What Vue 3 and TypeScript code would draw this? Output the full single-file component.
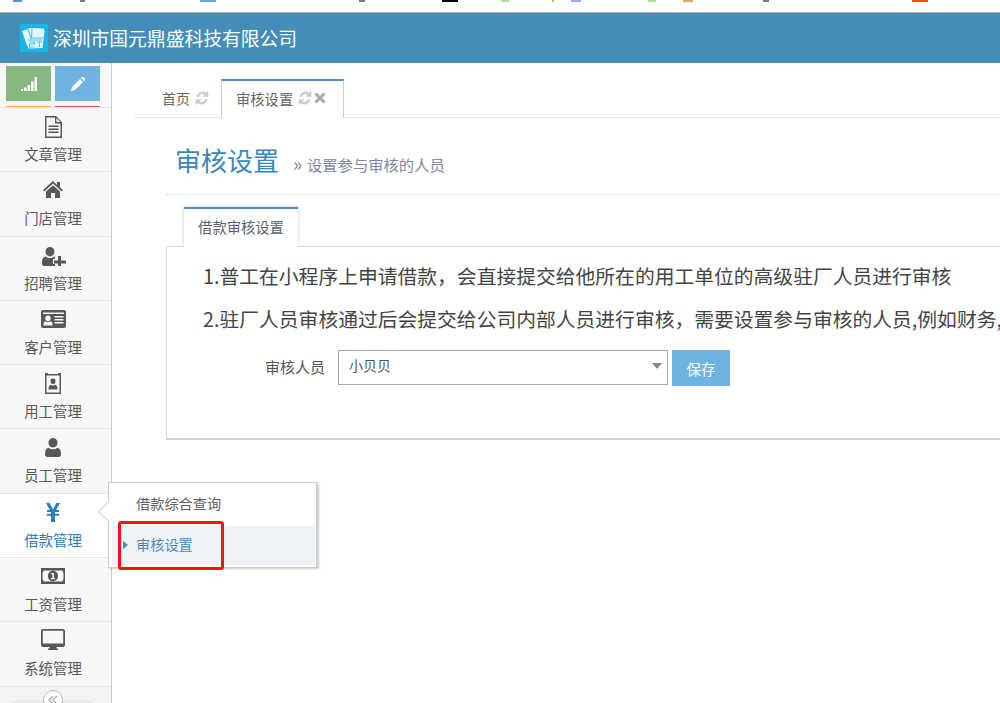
<script setup lang="ts">
interface NavItem {
  label: string
  path: string
  active?: boolean
}

const navItems: NavItem[] = [
  { label: '文章管理', path: 'M5 1h11l6 6v16H5zM6.500 2.500v19h14V8.500H15v-6zM16.500 3v4h4zM8.500 10.500h10V12h-10zM8.500 13.500h10V15h-10zM8.500 16.500h10V18h-10z' },
  { label: '门店管理', path: 'M13 2 3 11l1.200 1.400L13 4.600l8.800 7.800L23 11l-3-2.700V3h-3v3zM6 12.500 13 6.300l7 6.200V19h-5v-5h-4v5H6z' },
  { label: '招聘管理', path: 'M10 3a4.500 4.500 0 0 1 4.500 4.500c0 2.600-2 5-4.500 5s-4.500-2.400-4.500-5A4.500 4.500 0 0 1 10 3zM2 19c0-4 1-6 4-6.500 1 1 2.500 1.500 4 1.500s3-.5 4-1.500l1 .3V15h-2v5h2v2H4c-1.300 0-2-1.200-2-3zM18 12h3v4.500h5v3h-5V22h-3v-2.500h-4v-3h4z' },
  { label: '客户管理', path: 'M3 2h21a2 2 0 0 1 2 2v14a2 2 0 0 1-2 2H3a2 2 0 0 1-2-2V4a2 2 0 0 1 2-2zM3 4.500V6h21V4.500zM8 7.500a2.700 2.700 0 0 0-2.700 2.800c0 1.600 1.200 2.900 2.700 2.900s2.700-1.300 2.700-2.900A2.700 2.700 0 0 0 8 7.500zM3.500 17.500h9c0-2.500-.5-4-2-4.300-.7.600-1.500.9-2.500.9s-1.800-.3-2.500-.9c-1.500.3-2 1.800-2 4.300zM14.500 8v1.500h9V8zM14.500 11v1.500h9V11zM14.500 14v1.500h9V14z' },
  { label: '用工管理', path: 'M5 1h3v1h10V1h3v21H5zM6.500 3.500v17h13v-17zM13 6.500a2.500 2.500 0 0 1 2.500 2.700c0 1.600-1.100 2.900-2.500 2.900s-2.500-1.300-2.500-2.900A2.500 2.500 0 0 1 13 6.500zM8.500 17.500c0-3 .8-4.500 2.200-4.800.7.500 1.400.8 2.300.8s1.600-.3 2.300-.8c1.400.3 2.200 1.800 2.200 4.800z' },
  { label: '员工管理', path: 'M13 2a4.500 4.500 0 0 1 4.500 4.800c0 2.600-2 4.700-4.500 4.700s-4.500-2.100-4.500-4.700A4.500 4.500 0 0 1 13 2zM5 18.500c0-4 1-6.300 3.700-6.800 1.200 1 2.700 1.500 4.300 1.500s3.100-.5 4.300-1.500c2.700.5 3.700 2.800 3.700 6.800 0 1.600-1 2.500-2.500 2.500h-11C6 21 5 20.100 5 18.500z' },
  { label: '借款管理', path: 'M6 2h3.600l3.400 6.500L16.400 2H20l-3.800 7H19v2h-4v1.700h4v2h-4V21h-4v-6.300H7v-2h4V11H7V9h2.800z', active: true },
  { label: '工资管理', path: 'M1 3h24v16H1zM3.500 5.500c0 1.500-.5 2-1 2v7c.5 0 1 .5 1 2h19c0-1.500.5-2 1-2v-7c-.5 0-1-.5-1-2zM13 5.800c3 0 5 2.300 5 5.200s-2 5.200-5 5.200-5-2.300-5-5.200 2-5.200 5-5.200zM11.300 8v1.200h1V13H11v1.200h4V13h-1.100V8z' },
  { label: '系统管理', path: 'M3 0h20a2 2 0 0 1 2 2v14a2 2 0 0 1-2 2h-6.500v1.500H18V21H8v-1.500h1.500V18H3a2 2 0 0 1-2-2V2a2 2 0 0 1 2-2zM2.800 1.800v12.700h20.400V1.800z' }
]

const refreshPath = 'M11 2.200A5.500 5.500 0 0 0 2 5.500h1.800A3.800 3.800 0 0 1 9.900 3.700L8.200 5.400H13V.6zM3 11.800A5.500 5.500 0 0 0 12 8.500h-1.800a3.800 3.800 0 0 1-6.100 1.800l1.700-1.700H1v4.800z'
</script>

<template>
  <div class="page">
    <div class="browser-strip">
      <i class="bit" style="left: 13px; width: 9px; background: #5b8fe0"></i>
      <i class="bit" style="left: 80px; width: 5px; background: #777"></i>
      <i class="bit" style="left: 200px; width: 16px; background: #6f9fe8"></i>
      <i class="bit" style="left: 359px; width: 6px; background: #777"></i>
      <i class="bit" style="left: 442px; width: 16px; background: #000"></i>
      <i class="bit" style="left: 501px; width: 8px; background: #a6e29a"></i>
      <i class="bit" style="left: 552px; width: 2px; background: #e8a050"></i>
      <i class="bit" style="left: 571px; width: 10px; background: #8fb6e8"></i>
      <i class="bit" style="left: 648px; width: 8px; background: #a6e29a"></i>
      <i class="bit" style="left: 683px; width: 10px; background: #d9a86a"></i>
      <i class="bit" style="left: 763px; width: 6px; background: #777"></i>
      <i class="bit" style="left: 912px; width: 16px; background: #ff4a12"></i>
    </div>

    <header class="navbar">
      <svg class="logo" width="28" height="28" viewBox="0 0 28 28">
        <rect width="28" height="28" fill="#19b5ea" />
        <path d="M2 7l6-2 1-1 15 .5.500 3-2 16.500-14 .5L6 19z" fill="#e6f7fc" />
        <path d="M8 5l3 10M12 5l-.5 9h13M8 16h14M9.500 18h5v2h-5v3h5M17 18h5M19.500 18v5" fill="none" stroke="#4cc4ec" stroke-width="1.100" />
      </svg>
      <span class="brand">深圳市国元鼎盛科技有限公司</span>
    </header>

    <div class="layout">
      <aside class="sidebar">
        <div class="shortcuts">
          <div class="shortcut">
            <button class="short-btn green">
              <svg width="16" height="14" viewBox="0 0 16 14" fill="#fff">
                <rect x="0" y="12" width="2" height="2" />
                <rect x="3" y="10.500" width="2.500" height="3.500" />
                <rect x="6.500" y="8" width="2.500" height="6" />
                <rect x="10" y="4.500" width="2.500" height="9.500" />
                <rect x="13.500" y="0" width="2.500" height="14" />
              </svg>
            </button>
            <span class="short-line orange"></span>
          </div>
          <div class="shortcut">
            <button class="short-btn blue">
              <svg width="14" height="14" viewBox="0 0 14 14" fill="#fff">
                <path d="M0 14l1-4 8-8 3 3-8 8zM10 1l1-1c.5-.3 1-.3 1.500 0l1.500 1.500c.3.500.3 1 0 1.500l-1 1z" />
              </svg>
            </button>
            <span class="short-line red"></span>
          </div>
        </div>

        <nav class="nav-list">
          <a v-for="item in navItems" :key="item.label" class="nav-item" :class="{ active: item.active }">
            <svg class="nav-icon" width="26" height="24" viewBox="0 0 26 24">
              <path :d="item.path" fill="currentColor" fill-rule="evenodd" />
            </svg>
            <span class="nav-label">{{ item.label }}</span>
          </a>
        </nav>

        <div class="collapse">
          <span class="collapse-btn">
            <svg width="10" height="10" viewBox="0 0 10 10">
              <path d="M5 1 1 5l4 4M9 1 5 5l4 4" fill="none" stroke="#aaa" stroke-width="1.300" />
            </svg>
          </span>
        </div>
      </aside>

      <main class="main">
        <div class="tabbar">
          <div class="tab">
            <span>首页</span>
            <svg class="refresh" width="14" height="14" viewBox="0 0 14 14"><path :d="refreshPath" fill="#ccc" stroke="#ccc" stroke-width="0.700" /></svg>
          </div>
          <div class="tab current">
            <span>审核设置</span>
            <svg class="refresh" width="14" height="14" viewBox="0 0 14 14"><path :d="refreshPath" fill="#ccc" stroke="#ccc" stroke-width="0.700" /></svg>
            <svg class="close" width="12" height="12" viewBox="0 0 12 12"><path d="M1.500 1.500l9 9M10.500 1.500l-9 9" stroke="#aaa" stroke-width="3" /></svg>
          </div>
        </div>

        <div class="content">
          <div class="page-header">
            <h1>审核设置</h1>
            <small><span class="raquo">»</span>设置参与审核的人员</small>
          </div>

          <div class="inner-tabs">
            <div class="inner-tab">借款审核设置</div>
          </div>

          <section class="panel">
            <p class="line">1.普工在小程序上申请借款，会直接提交给他所在的用工单位的高级驻厂人员进行审核</p>
            <p class="line">2.驻厂人员审核通过后会提交给公司内部人员进行审核，需要设置参与审核的人员,例如财务,人事等</p>
            <div class="form-row">
              <label>审核人员</label>
              <div class="select">
                <span>小贝贝</span>
                <i class="caret"></i>
              </div>
              <button class="save">保存</button>
            </div>
          </section>
        </div>
      </main>
    </div>

    <div class="popup">
      <i class="popup-arrow"></i>
      <div class="popup-item">借款综合查询</div>
      <div class="popup-item selected"><i class="marker"></i>审核设置</div>
    </div>
    <div class="annotation"></div>
  </div>
</template>

<style>
html,
body {
  margin: 0;
  background: #fff;
}
</style>

<style scoped>
.page {
  position: relative;
  width: 1000px;
  height: 703px;
  overflow: hidden;
  background: #fff;
  font-family: "Noto Sans CJK SC", "Liberation Sans", sans-serif;
  color: #555;
}

.browser-strip {
  position: relative;
  height: 12px;
  border-bottom: 1px solid #b4b4b4;
  box-sizing: content-box;
}

.bit {
  position: absolute;
  top: 0;
  height: 2px;
}

.navbar {
  height: 50px;
  background: #438eb9;
  display: flex;
  align-items: center;
  padding-left: 20px;
  box-sizing: border-box;
}

.logo {
  flex: none;
}

.brand {
  margin-left: 5px;
  font-size: 18.800px;
  color: #fff;
  line-height: 24px;
}

.layout {
  display: flex;
  height: 640px;
}

.sidebar {
  width: 112px;
  flex: none;
  box-sizing: border-box;
  background: #f7f7f7;
  border-right: 1px solid #ccc;
  display: flex;
  flex-direction: column;
}

.shortcuts {
  display: flex;
  gap: 4px;
  height: 44px;
  padding: 3px 0 0 6px;
  box-sizing: border-box;
}

.shortcut {
  width: 45px;
}

.short-btn {
  display: flex;
  align-items: center;
  justify-content: center;
  width: 45px;
  height: 35px;
  padding: 0;
  border: 0;
}

.short-btn.green {
  background: #87b87f;
}

.short-btn.blue {
  background: #6fb3e0;
}

.short-line {
  display: block;
  height: 1px;
  margin-top: 5px;
}

.short-line.orange {
  background: #ffb44b;
}

.short-line.red {
  background: #d15b47;
}

.nav-list {
  border-top: 1px solid #e5e5e5;
}

.nav-item {
  display: flex;
  flex-direction: column;
  align-items: center;
  height: 64.300px;
  box-sizing: border-box;
  padding: 7px 5px 0 0;
  border-bottom: 1px solid #e5e5e5;
  color: #585858;
}

.nav-item.active {
  background: #fff;
  color: #2b7dbc;
}

.nav-icon {
  flex: none;
}

.nav-label {
  margin-top: 5px;
  font-size: 14.400px;
  line-height: 20px;
}

.collapse {
  position: relative;
  flex: 1;
  background: #f3f3f3;
}

.collapse::before {
  content: "";
  position: absolute;
  left: 13px;
  right: 17px;
  top: 14px;
  border-top: 1px solid #e0e0e0;
}

.collapse-btn {
  position: absolute;
  left: 43px;
  top: 3px;
  display: flex;
  align-items: center;
  justify-content: center;
  width: 20px;
  height: 20px;
  box-sizing: border-box;
  border: 1px solid #bbb;
  border-radius: 50%;
  background: #fff;
}

.main {
  flex: 1;
  min-width: 0;
}

.tabbar {
  display: flex;
  align-items: flex-end;
  height: 55px;
  margin-left: 22px;
  padding-top: 16px;
  box-sizing: border-box;
  border-bottom: 1px solid #dfe5ee;
}

.tab {
  display: flex;
  align-items: center;
  width: 87px;
  height: 38px;
  padding-left: 28px;
  box-sizing: border-box;
  font-size: 14px;
  color: #666;
}

.tab.current {
  width: 123px;
  height: 39px;
  margin-bottom: -1px;
  padding: 0 0 3px 14px;
  background: #fff;
  border: 1px solid #c5d0dc;
  border-top: 2px solid #4c8fbd;
  border-bottom: 0;
  font-size: 14.300px;
}

.refresh {
  margin-left: 5px;
  flex: none;
}

.close {
  margin-left: 2px;
  flex: none;
}

.content {
  padding-left: 54px;
}

.page-header {
  display: flex;
  align-items: baseline;
  height: 77px;
  padding: 24px 0 0 9px;
  box-sizing: border-box;
  border-bottom: 1px dotted #d5d5d5;
}

h1 {
  margin: 0;
  font-size: 26px;
  font-weight: 400;
  line-height: 36px;
  color: #3a87bd;
}

small {
  margin-left: 14px;
  font-size: 15.300px;
  color: #8089a0;
}

.raquo {
  display: inline-block;
  width: 14px;
  font-size: 19px;
  line-height: 1;
}

.inner-tabs {
  display: flex;
  padding: 12px 0 0 18px;
  margin-bottom: -1px;
  position: relative;
}

.inner-tab {
  width: 114px;
  height: 40px;
  box-sizing: border-box;
  border-top: 2px solid #4c8fbd;
  background: #fff;
  box-shadow: 0 0 3px rgba(100, 110, 130, 0.4);
  clip-path: inset(-3px -3px 0 -3px);
  font-size: 14.300px;
  line-height: 36px;
  text-align: center;
  color: #576373;
}

.panel {
  height: 194px;
  box-sizing: border-box;
  padding-top: 15px;
  border-top: 1px solid #d5dbe3;
  border-left: 1px solid #d5dbe3;
  border-bottom: 2px solid #d0d0d0;
  white-space: nowrap;
  overflow: hidden;
}

.line {
  margin: 0 0 15px 36px;
  font-size: 19.800px;
  line-height: 28px;
  color: #444;
}

.form-row {
  display: flex;
  align-items: flex-start;
  margin-top: 17px;
}

label {
  width: 171px;
  padding-right: 13px;
  box-sizing: border-box;
  text-align: right;
  font-size: 15px;
  line-height: 33px;
  color: #555;
}

.select {
  position: relative;
  width: 330px;
  height: 35px;
  box-sizing: border-box;
  border: 1px solid #a8a8a8;
  padding-left: 10px;
  font-size: 14px;
  line-height: 28px;
  color: #555;
}

.caret {
  position: absolute;
  right: 5px;
  top: 12px;
  width: 0;
  height: 0;
  border: 5px solid transparent;
  border-top: 6px solid #888;
  border-bottom: 0;
}

.save {
  width: 58px;
  height: 36px;
  margin-left: 4px;
  padding: 0;
  border: 0;
  background: #6fb3e0;
  color: #fff;
  font: 14.500px "Noto Sans CJK SC", sans-serif;
}

.popup {
  position: absolute;
  left: 108px;
  top: 482px;
  width: 209px;
  height: 86px;
  box-sizing: border-box;
  padding: 0 1px 2px 3px;
  background: #fff;
  border: 1px solid #ccc;
  box-shadow: 2px 1px 2px rgba(0, 0, 0, 0.2);
  font-size: 14.200px;
}

.popup-arrow {
  position: absolute;
  left: -8px;
  top: 21px;
  width: 14px;
  height: 14px;
  background: #fff;
  border-left: 1px solid #ccc;
  border-bottom: 1px solid #ccc;
  transform: rotate(45deg);
}

.popup-item {
  position: relative;
  height: 43px;
  padding-left: 24px;
  line-height: 40px;
  color: #616161;
}

.popup-item.selected {
  height: 39px;
  line-height: 36px;
  background: #edf3f7;
  color: #4b88b7;
}

.marker {
  position: absolute;
  left: 11px;
  top: 15px;
  width: 0;
  height: 0;
  border: 4px solid transparent;
  border-left: 5px solid #4b88b7;
  border-right: 0;
}

.annotation {
  position: absolute;
  left: 118px;
  top: 521px;
  width: 106px;
  height: 49px;
  box-sizing: border-box;
  border: 3px solid #f5140f;
  border-radius: 3px;
}
</style>
